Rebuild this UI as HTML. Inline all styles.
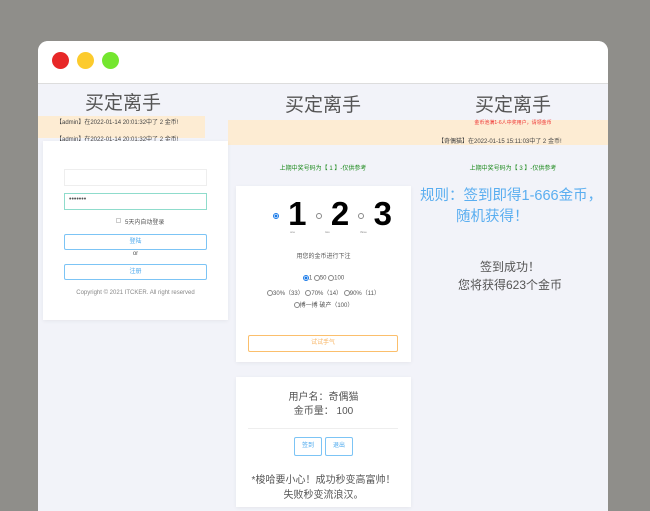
<!DOCTYPE html>
<html><head><meta charset="utf-8"><style>
*{margin:0;padding:0;box-sizing:border-box}
body{width:650px;height:500px;background:#8f8e8a;position:relative;overflow:hidden;font-family:"Liberation Sans","Noto Sans CJK SC",sans-serif;color:#555}
.win{position:absolute;left:38px;top:41px;width:570px;height:470px;background:#f2f3f9;border-radius:10px 10px 0 0;overflow:hidden}
.bar{height:43px;background:#fff;border-bottom:1px solid #ddd;position:relative}
.dot{position:absolute;top:11px;width:17px;height:17px;border-radius:50%}
.a{position:absolute}
.t{position:absolute;font-size:19px;color:#555;text-align:center}
.sm{font-size:6px;white-space:nowrap}
.card{position:absolute;background:#fff;box-shadow:0 1px 4px rgba(0,0,0,.06)}
.btn{position:absolute;border:1px solid #7cc4f5;border-radius:2px;color:#4aa8ee;font-size:6px;text-align:center}
.r{display:inline-block;width:6px;height:6px;border:1px solid #888;border-radius:50%;vertical-align:middle}
.rc{border-color:#1a7ae8;background:radial-gradient(#1a7ae8 45%,#fff 55%)}
</style></head><body>
<div class="win">
 <div class="bar">
  <div class="dot" style="left:14px;background:#e72727"></div>
  <div class="dot" style="left:39px;background:#fccb2d"></div>
  <div class="dot" style="left:64px;background:#74e62f"></div>
 </div>
</div>
<!-- col1 -->
<div class="t" style="left:38px;top:88px;width:170px">买定离手</div>
<div class="a" style="left:38px;top:116px;width:167px;height:22px;background:#fdecd3"></div>
<div class="a sm" style="left:56px;top:117px;color:#444">【admin】在2022-01-14 20:01:32中了 2 金币!</div>
<div class="a sm" style="left:56px;top:134px;color:#444">【admin】在2022-01-14 20:01:32中了 2 金币!</div>
<div class="a" style="left:228px;top:120px;width:380px;height:25px;background:#fdecd3"></div>
<div class="card" style="left:43px;top:141px;width:185px;height:179px">
 <div class="a" style="left:21px;top:28px;width:143px;height:17px;border:1px solid #eee"></div>
 <div class="a" style="left:21px;top:52px;width:143px;height:17px;border:1px solid #8fdccc;font-size:7px;padding:2px 4px">•••••••</div>
 <div class="a" style="left:73px;top:77px;width:5px;height:5px;border:1px solid #ccc"></div>
 <div class="a sm" style="left:82px;top:76px">5天内自动登录</div>
 <div class="btn" style="left:21px;top:93px;width:143px;height:16px;line-height:14px">登陆</div>
 <div class="a sm" style="left:0;width:185px;text-align:center;top:110px">or</div>
 <div class="btn" style="left:21px;top:123px;width:143px;height:16px;line-height:14px">注册</div>
 <div class="a sm" style="left:0;width:185px;text-align:center;top:149px;color:#888">Copyright © 2021 ITCKER. All right reserved</div>
</div>
<!-- col2 -->
<div class="t" style="left:228px;top:90px;width:190px">买定离手</div>
<div class="a sm" style="left:228px;width:190px;text-align:center;top:163px;color:#1d8a1d">上期中奖号码为【 1 】-仅供参考</div>
<div class="card" style="left:236px;top:186px;width:175px;height:176px">
 <div class="a" style="left:37px;top:9px;font-size:33px;line-height:38px;font-weight:bold;color:#000;white-space:nowrap"><span class="r rc"></span> 1 <span class="r"></span> 2 <span class="r"></span> 3</div>
 <div class="a" style="left:54px;top:44px;font-size:3px;color:#888">one</div>
 <div class="a" style="left:89px;top:44px;font-size:3px;color:#888">two</div>
 <div class="a" style="left:124px;top:44px;font-size:3px;color:#888">three</div>
 <div class="a sm" style="left:0;width:175px;text-align:center;top:65px">用您的金币进行下注</div>
 <div class="a sm" style="left:0;width:175px;text-align:center;top:89px"><span class="r rc"></span>1 <span class="r"></span>50 <span class="r"></span>100</div>
 <div class="a sm" style="left:0;width:175px;text-align:center;top:102px"><span class="r"></span>30%（33） <span class="r"></span>70%（14） <span class="r"></span>90%（11）</div>
 <div class="a sm" style="left:0;width:175px;text-align:center;top:114px"><span class="r"></span>搏一搏 破产（100）</div>
 <div class="a" style="left:12px;top:149px;width:150px;height:17px;border:1px solid #fbbf6c;border-radius:2px;color:#f7b25e;font-size:6px;text-align:center;line-height:15px">试试手气</div>
</div>
<div class="card" style="left:236px;top:377px;width:175px;height:130px">
 <div class="a" style="left:0;width:175px;text-align:center;top:14px;font-size:10px;line-height:14px">用户名：奇偶猫<br>金币量： 100</div>
 <div class="a" style="left:12px;top:51px;width:150px;height:1px;background:#eee"></div>
 <div class="btn" style="left:58px;top:60px;width:28px;height:19px;line-height:17px">签到</div>
 <div class="btn" style="left:89px;top:60px;width:28px;height:19px;line-height:17px">退出</div>
 <div class="a" style="left:0;width:175px;text-align:center;top:96px;font-size:10px;line-height:15px">*梭哈要小心！成功秒变高富帅！<br>失败秒变流浪汉。</div>
</div>
<!-- col3 -->
<div class="t" style="left:418px;top:90px;width:190px">买定离手</div>
<div class="a" style="left:418px;width:190px;text-align:center;top:119px;font-size:5px;color:#e33">金币池满1-6人中奖用户，请领金币</div>
<div class="a sm" style="left:438px;top:136px;color:#444">【奇偶猫】在2022-01-15 15:11:03中了 2 金币!</div>
<div class="a sm" style="left:418px;width:190px;text-align:center;top:163px;color:#1d8a1d">上期中奖号码为【 3 】-仅供参考</div>
<div class="a" style="left:420px;width:190px;top:186px;font-size:14.5px;line-height:21px;color:#5aaef0;white-space:nowrap">规则：签到即得1-666金币，<br><span style="padding-left:36px">随机获得！</span></div>
<div class="a" style="left:435px;width:150px;text-align:center;top:258px;font-size:12px;line-height:18px">签到成功！<br>您将获得623个金币</div>
</body></html>
